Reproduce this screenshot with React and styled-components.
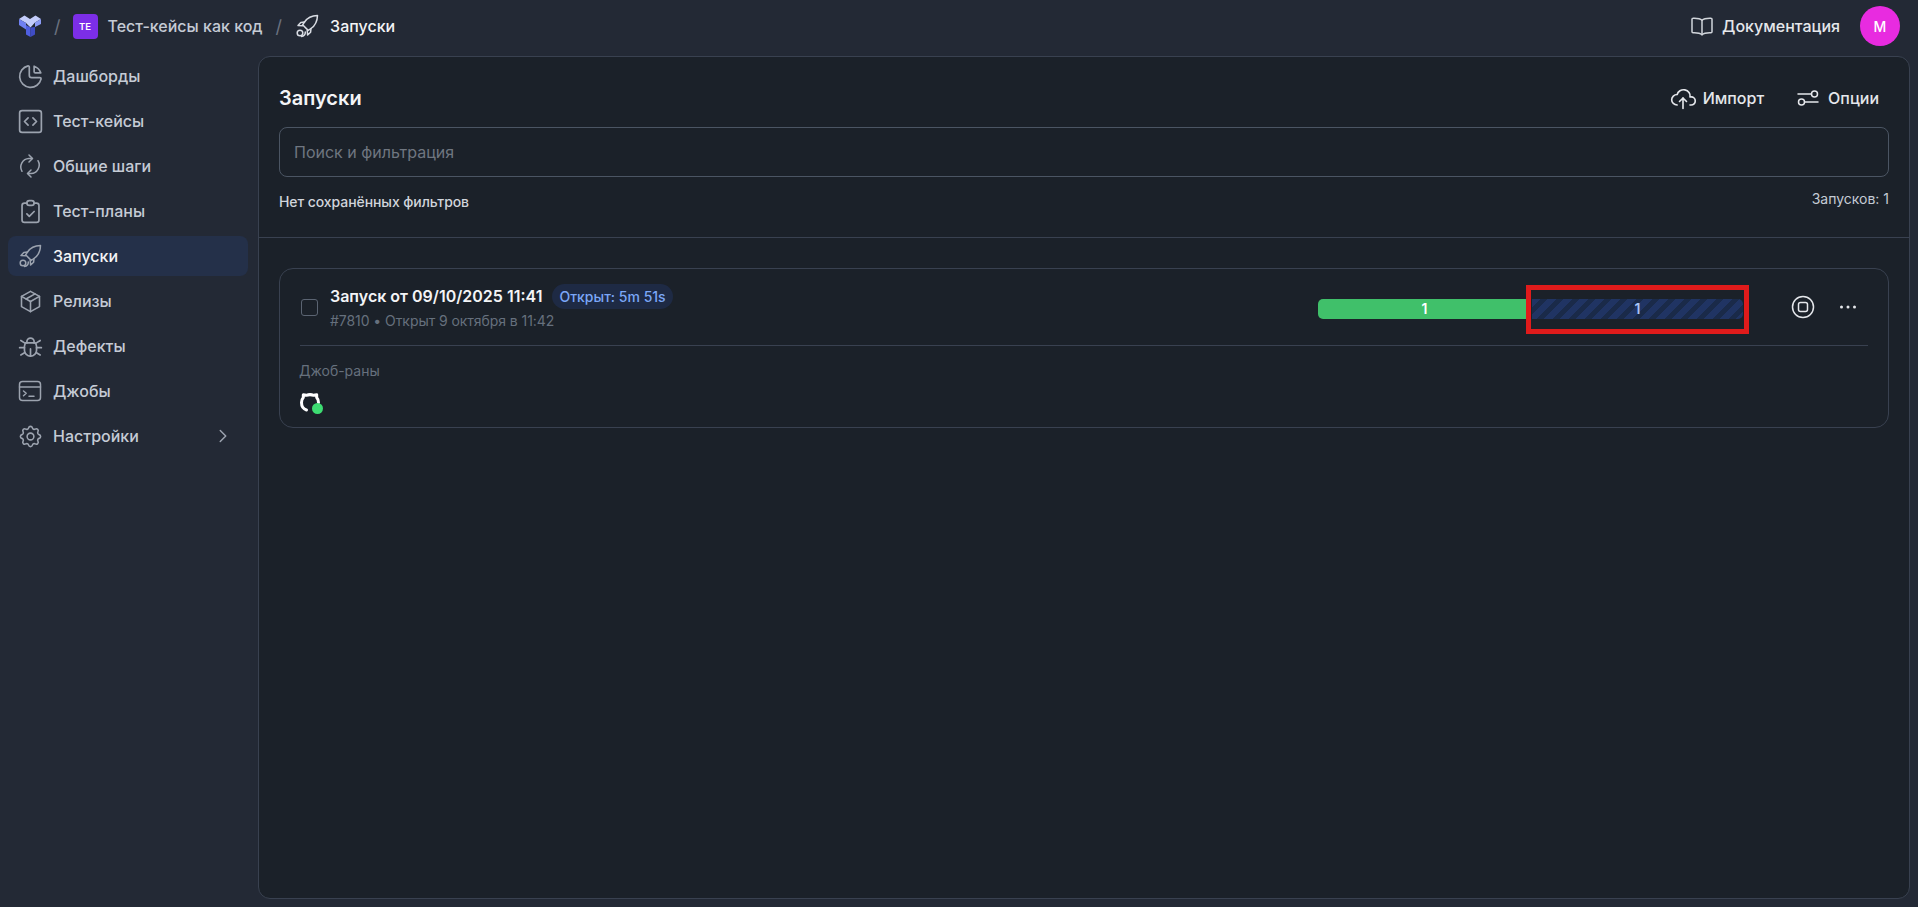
import React from "react";
import styled, { createGlobalStyle } from "styled-components";
import {
  TbChartPie, TbClipboardCheck, TbPackage, TbBug, TbSettings, TbCloudUpload, TbChevronRight,
} from "react-icons/tb";
import { SquareCode } from "lucide-react";

const Global = createGlobalStyle`
  html, body { margin: 0; padding: 0; height: 100%; background: #232935; }
  * { box-sizing: border-box; }
  body { font-family: Inter, "Noto Sans", sans-serif; overflow: hidden; }
`;

const Page = styled.div`
  width: 100%;
  height: 100vh;
  display: grid;
  grid-template-columns: 258px 1fr;
  grid-template-rows: 56px 1fr;
  padding-right: 8px;
  padding-bottom: 8px;
`;

const TopBar = styled.header`
  grid-column: 1 / 3;
  display: flex;
  align-items: center;
  padding: 0 10px 4px 18px;
`;

const Crumbs = styled.nav`
  display: flex;
  align-items: center;
  flex: 1;
  color: #d8dce3;
`;

const Slash = styled.span`
  color: #6b7280;
  font-size: 18px;
  margin: 0 ${(p) => p.$after}px 0 ${(p) => p.$before}px;
`;

const ProjectTile = styled.span`
  width: 25px;
  height: 25px;
  border-radius: 4px;
  background: #7c2ee8;
  color: #fff;
  font-size: 9.5px;
  font-weight: 600;
  display: flex;
  align-items: center;
  justify-content: center;
  margin-right: 10px;
`;

const Crumb = styled.span`
  font-size: 16px;
  font-weight: 500;
  line-height: 24px;
  color: ${(p) => (p.$current ? "#f3f4f6" : "#c5cbd5")};
  margin-left: ${(p) => (p.$current ? "11px" : "0")};
`;

const TopRight = styled.div`
  display: flex;
  align-items: center;
`;

const DocLink = styled.span`
  display: flex;
  align-items: center;
  gap: 8px;
  font-size: 16px;
  font-weight: 500;
  color: #e5e7eb;
  margin-right: 20px;
`;

const Avatar = styled.span`
  width: 40px;
  height: 40px;
  border-radius: 50%;
  background: #e82be0;
  color: #fff;
  font-size: 14px;
  font-weight: 500;
  display: flex;
  align-items: center;
  justify-content: center;
`;

const Sidebar = styled.aside`
  display: flex;
  flex-direction: column;
  gap: 5px;
  padding: 0 10px 0 8px;
`;

const NavItem = styled.div`
  height: 40px;
  display: flex;
  align-items: center;
  gap: 11px;
  padding: 0 14px 0 10px;
  border-radius: 8px;
  font-size: 16px;
  font-weight: 500;
  color: ${(p) => (p.$active ? "#f3f4f6" : "#c5cbd5")};
  background: ${(p) => (p.$active ? "#243049" : "transparent")};
`;

const IconSlot = styled.span`
  width: 24px;
  height: 24px;
  flex: none;
  display: flex;
  align-items: center;
  justify-content: center;
  color: ${(p) => p.$color || "#9ca3af"};
  & > svg { flex: none; }
`;

const NavLabel = styled.span`
  flex: 1;
`;

const Main = styled.main`
  background: #1b2129;
  border: 1px solid #394150;
  border-radius: 12px;
  display: flex;
  flex-direction: column;
  min-height: 0;
`;

const Head = styled.section`
  padding: 20px 20px 0;
  border-bottom: 1px solid #394150;
  height: 181px;
`;

const TitleRow = styled.div`
  display: flex;
  align-items: center;
  justify-content: space-between;
  height: 42px;
  padding-right: 10px;
`;

const Title = styled.h1`
  margin: 0;
  font-size: 20px;
  font-weight: 600;
  color: #f3f4f6;
`;

const Actions = styled.div`
  display: flex;
  gap: 32px;
`;

const Action = styled.span`
  display: flex;
  align-items: center;
  gap: 8px;
  font-size: 16px;
  font-weight: 500;
  color: #e5e7eb;
`;

const Search = styled.div`
  height: 50px;
  margin-top: 8px;
  border: 1px solid #4b5563;
  border-radius: 8px;
  padding: 0 14px;
  display: flex;
  align-items: center;
  font-size: 16px;
  color: #6f7680;
`;

const FilterRow = styled.div`
  display: flex;
  justify-content: space-between;
  margin-top: 15px;
  font-size: 14px;
`;

const SavedFilters = styled.span`
  color: #d1d5db;
  font-weight: 500;
  margin-top: 1px;
  letter-spacing: -0.08px;
`;

const Count = styled.span`
  color: #c5cbd5;
  margin-top: -2px;
`;

const Content = styled.section`
  padding: 30px 20px;
`;

const Card = styled.article`
  height: 160px;
  border: 1px solid #394150;
  border-radius: 14px;
  padding: 0 20px;
`;

const CardTop = styled.div`
  height: 77px;
  display: flex;
  align-items: center;
  border-bottom: 1px solid #394150;
`;

const Check = styled.span`
  width: 17px;
  height: 17px;
  border: 1px solid #5b6472;
  border-radius: 3px;
  margin: 0 12px 0 1px;
  flex: none;
`;

const RunInfo = styled.div`
  flex: 1;
  display: flex;
  flex-direction: column;
  gap: 1px;
`;

const RunTitleRow = styled.div`
  display: flex;
  align-items: center;
  gap: 10px;
  height: 26px;
`;

const RunTitle = styled.span`
  font-size: 16px;
  font-weight: 600;
  color: #f3f4f6;
  line-height: 24px;
  margin-top: -2px;
`;

const Badge = styled.span`
  height: 25px;
  padding: 0 7px;
  border-radius: 13px;
  background: #1e2a44;
  color: #7ba7f7;
  font-size: 14px;
  font-weight: 500;
  display: flex;
  align-items: center;
`;

const RunMeta = styled.span`
  font-size: 14px;
  color: #66707d;
  line-height: 20px;
  letter-spacing: -0.06px;
`;

const Bar = styled.div`
  width: 425px;
  height: 20px;
  display: flex;
  gap: 5px;
  margin: 3px 48px 0 0;
`;

const BarPart = styled.div`
  flex: ${(p) => p.$grow};
  position: relative;
  display: flex;
  align-items: center;
  justify-content: center;
  font-size: 14px;
  font-weight: 600;
  border-radius: ${(p) => p.$radius};
`;

const Passed = styled(BarPart)`
  background: #40c06a;
  color: #fff;
  padding-left: 4px;
`;

const InProgress = styled(BarPart)`
  color: #a9c4f5;
  background: repeating-linear-gradient(135deg, #203463 0 6px, #1a2a49 6px 11.3px);
`;

const Highlight = styled.span`
  position: absolute;
  inset: -14px -6px -15px -6px;
  border: 5px solid #e01b1b;
  pointer-events: none;
`;

const RowIcons = styled.div`
  display: flex;
  align-items: center;
  gap: 21px;
  color: #e5e7eb;
  margin-right: 8px;
`;

const CardBottom = styled.div`
  padding-top: 15px;
`;

const JobsLabel = styled.div`
  font-size: 14px;
  line-height: 20px;
  color: #66707d;
  margin-left: -1px;
`;

const JobIcon = styled.div`
  position: relative;
  width: 20px;
  height: 20px;
  margin-top: 11px;
`;

const StatusDot = styled.span`
  position: absolute;
  right: -3px;
  bottom: -2px;
  width: 11px;
  height: 11px;
  border-radius: 50%;
  background: #3ddc72;
`;

const Svg = ({ size = 24, children, width = 1.5 }) => (
  <svg width={size} height={size} viewBox="0 0 24 24" fill="none" stroke="currentColor" strokeWidth={width} strokeLinecap="round" strokeLinejoin="round">
    {children}
  </svg>
);

const Rocket = ({ size }) => (
  <Svg size={size}>
    <path d="M22.500 1.500c-6 .2-10.300 2.500-13 6.500L7.600 10.800l5.600 5.600 2.800-1.900c4-2.700 6.300-7 6.500-13z" />
    <path d="M9.500 8 5.800 8.400 3 11.400l4.600.4M16 14.500l-.4 3.700-3 2.800-.4-4.600" />
    <circle cx="5" cy="19" r="2.800" />
    <path d="M10.300 18c.2 2.400-1.300 4.300-3.800 4.500" />
  </Svg>
);

const Repeat = () => (
  <Svg>
    <path d="M11 1l3.500 3.500L11 8" />
    <path d="M14 4.500h-3a8.500 8.500 0 0 0-7 12.800" />
    <path d="M13 23l-3.500-3.500L13 16" />
    <path d="M10 19.500h3a8.500 8.500 0 0 0 7-12.800" />
  </Svg>
);

const Book = () => (
  <Svg>
    <path d="M12 6.200C10.400 4.700 8 4 3 4.200c-.6 0-1 .4-1 1v12.600c0 .6.4 1 1 1 4.500-.2 7 .2 9 2 2-1.800 4.500-2.200 9-2 .6 0 1-.4 1-1V5.200c0-.6-.4-1-1-1-5-.2-7.400.5-9 2z" />
    <path d="M12 6.200V20.800" />
  </Svg>
);

const Jobs = () => (
  <Svg>
    <rect x="1.500" y="2.500" width="21" height="19" rx="3" />
    <path d="M1.500 8h21M5.500 12l2.700 2.300L5.500 16.800M11 17.300h5" />
  </Svg>
);

const Options = () => (
  <Svg>
    <path d="M2 8h13M9 16h13" />
    <circle cx="18.500" cy="8" r="3" />
    <circle cx="5.500" cy="16" r="3" />
  </Svg>
);

const Stop = () => (
  <Svg>
    <circle cx="12" cy="12" r="10.500" />
    <rect x="7.500" y="7.500" width="9" height="9" rx="2" />
  </Svg>
);

const Dots = () => (
  <svg width="24" height="24" viewBox="0 0 24 24" fill="currentColor">
    <circle cx="5.500" cy="12" r="1.500" />
    <circle cx="12" cy="12" r="1.500" />
    <circle cx="18.500" cy="12" r="1.500" />
  </svg>
);

const Logo = () => (
  <svg width="24" height="24" viewBox="0 0 24 24">
    <path d="M1 5 6.500 1.500 12 5l5.500-3.500L23 5l-6 3.500-4.500 5L8 9z" fill="#c3ccfb" />
    <path d="M1 5v6l7 4.500V9z" fill="#6f80f2" />
    <path d="M8 11v9.500l4.500 2.500v-9.500z" fill="#4f5fe0" />
    <path d="M12.500 13.500V23l4.500-2.500V13z" fill="#3f4cc4" />
    <path d="M17 8.500V13l6-3V5z" fill="#8c9bf6" />
  </svg>
);

const GitHubMark = () => (
  <svg width="20" height="20" viewBox="0 0 20 20" fill="none" stroke="#fff" strokeWidth="3" strokeLinejoin="round" strokeLinecap="round">
    <path d="M6.500 18C3.500 17 1.500 14 1.500 10.500 1.500 8.500 2 7 3.300 5.500L3.300 2.800 6.300 3.300C8.500 2.500 11.500 2.500 13.700 3.300L16.700 2.800 16.700 5.500C18 7 18.500 8.500 18.500 10.500" />
  </svg>
);

const tb = { size: 29, strokeWidth: 1.4 };

const nav = [
  { label: "Дашборды", icon: <TbChartPie {...tb} /> },
  { label: "Тест-кейсы", icon: <SquareCode size={29} strokeWidth={1.4} /> },
  { label: "Общие шаги", icon: <Repeat /> },
  { label: "Тест-планы", icon: <TbClipboardCheck {...tb} /> },
  { label: "Запуски", icon: <Rocket />, active: true },
  { label: "Релизы", icon: <TbPackage size={27} strokeWidth={1.4} /> },
  { label: "Дефекты", icon: <TbBug {...tb} /> },
  { label: "Джобы", icon: <Jobs /> },
  { label: "Настройки", icon: <TbSettings size={27} strokeWidth={1.4} />, more: true },
];

export default function App() {
  return (
    <Page>
      <Global />
      <TopBar>
        <Crumbs>
          <Logo />
          <Slash $before={12} $after={12}>/</Slash>
          <ProjectTile>TE</ProjectTile>
          <Crumb>Тест-кейсы как код</Crumb>
          <Slash $before={13} $after={13}>/</Slash>
          <Rocket />
          <Crumb $current>Запуски</Crumb>
        </Crumbs>
        <TopRight>
          <DocLink><IconSlot $color="#d1d5db"><Book /></IconSlot>Документация</DocLink>
          <Avatar>M</Avatar>
        </TopRight>
      </TopBar>
      <Sidebar>
        {nav.map((n) => (
          <NavItem key={n.label} $active={n.active}>
            <IconSlot>{n.icon}</IconSlot>
            <NavLabel>{n.label}</NavLabel>
            {n.more && <TbChevronRight size={22} color="#9ca3af" strokeWidth={1.6} />}
          </NavItem>
        ))}
      </Sidebar>
      <Main>
        <Head>
          <TitleRow>
            <Title>Запуски</Title>
            <Actions>
              <Action><IconSlot $color="#e5e7eb"><TbCloudUpload size={28} strokeWidth={1.4} /></IconSlot>Импорт</Action>
              <Action><IconSlot $color="#e5e7eb"><Options /></IconSlot>Опции</Action>
            </Actions>
          </TitleRow>
          <Search>Поиск и фильтрация</Search>
          <FilterRow>
            <SavedFilters>Нет сохранённых фильтров</SavedFilters>
            <Count>Запусков: 1</Count>
          </FilterRow>
        </Head>
        <Content>
          <Card>
            <CardTop>
              <Check />
              <RunInfo>
                <RunTitleRow>
                  <RunTitle>Запуск от 09/10/2025 11:41</RunTitle>
                  <Badge>Открыт: 5m 51s</Badge>
                </RunTitleRow>
                <RunMeta>#7810 • Открыт 9 октября в 11:42</RunMeta>
              </RunInfo>
              <Bar>
                <Passed $grow={207} $radius="5px 0 0 5px">1</Passed>
                <InProgress $grow={213} $radius="0 5px 5px 0">
                  1
                  <Highlight />
                </InProgress>
              </Bar>
              <RowIcons>
                <Stop />
                <Dots />
              </RowIcons>
            </CardTop>
            <CardBottom>
              <JobsLabel>Джоб-раны</JobsLabel>
              <JobIcon>
                <GitHubMark />
                <StatusDot />
              </JobIcon>
            </CardBottom>
          </Card>
        </Content>
      </Main>
    </Page>
  );
}
